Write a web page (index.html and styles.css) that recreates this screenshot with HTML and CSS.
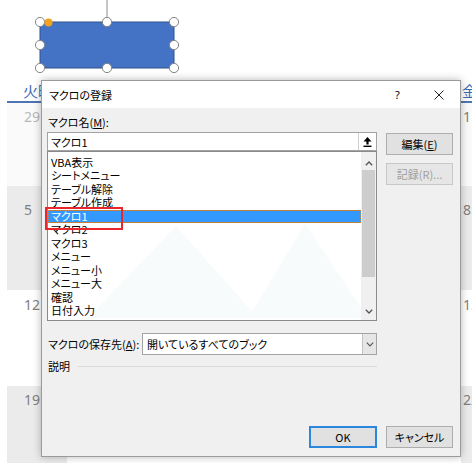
FILE: index.html
```html
<!DOCTYPE html>
<html lang="ja">
<head>
<meta charset="utf-8">
<title>マクロの登録</title>
<link rel="stylesheet" href="styles.css">
</head>
<body>
<div class="page">
  <div class="cal">
    <div class="col col-left">
      <div class="col-head">火曜</div>
      <div class="cell r1 prev">29</div>
      <div class="cell r2 shade">5</div>
      <div class="cell r3">12</div>
      <div class="cell r4 shade">19</div>
    </div>
    <div class="col col-right">
      <div class="col-head">金曜</div>
      <div class="cell r1">1</div>
      <div class="cell r2 shade">8</div>
      <div class="cell r3">15</div>
      <div class="cell r4 shade">22</div>
    </div>
  </div>

  <svg class="shape" width="200" height="80" viewBox="0 0 200 80">
    <line x1="107" y1="0" x2="107" y2="17.5" stroke="#8c8c8c" stroke-width="1"/>
    <rect x="40" y="22" width="134" height="46" fill="#4472c4" stroke="#2f528f" stroke-width="1"/>
    <g fill="#fff" stroke="#858585" stroke-width="1">
      <circle cx="40" cy="22" r="4.6"/>
      <circle cx="107" cy="22" r="4.6"/>
      <circle cx="174" cy="22" r="4.6"/>
      <circle cx="40" cy="45" r="4.6"/>
      <circle cx="174" cy="45" r="4.6"/>
      <circle cx="40" cy="68" r="4.6"/>
      <circle cx="107" cy="68" r="4.6"/>
      <circle cx="174" cy="68" r="4.6"/>
    </g>
    <circle cx="48.5" cy="22.5" r="4" fill="#f2a21c"/>
  </svg>

  <div class="dialog">
    <div class="titlebar">
      <span class="title">マクロの登録</span>
      <span class="help">?</span>
      <svg class="close" width="10" height="10" viewBox="0 0 10 10"><path d="M0.5 0.5 L9.5 9.5 M9.5 0.5 L0.5 9.5" stroke="#222" stroke-width="1" fill="none"/></svg>
    </div>
    <div class="dbody">
      <div class="top">
        <div class="main">
          <div class="label">マクロ名(<u>M</u>):</div>
          <div class="namebox">
            <span class="nametext">マクロ1</span>
            <span class="refbtn"><svg width="9" height="10" viewBox="0 0 9 10"><path d="M4.5 0 L8.5 4.5 L5.6 4.5 L5.6 7.6 L3.4 7.6 L3.4 4.5 L0.5 4.5 Z" fill="#000"/><rect x="0.5" y="8.6" width="8" height="1.4" fill="#000"/></svg></span>
          </div>
          <div class="list">
            <div class="items">
              <svg class="mark" width="313" height="166" viewBox="0 0 313 166"><path d="M40 166 L128 74 L210 166 Z M200 166 L257 72 L320 166 Z" fill="#f8fbfb"/></svg>
              <div class="item">VBA表示</div>
              <div class="item">シートメニュー</div>
              <div class="item">テーブル解除</div>
              <div class="item">テーブル作成</div>
              <div class="item sel">マクロ1</div>
              <div class="item">マクロ2</div>
              <div class="item">マクロ3</div>
              <div class="item">メニュー</div>
              <div class="item">メニュー小</div>
              <div class="item">メニュー大</div>
              <div class="item">確認</div>
              <div class="item">日付入力</div>
            </div>
            <div class="scroll">
              <svg class="chev up" width="8" height="5" viewBox="0 0 8 5"><path d="M0.8 4.3 L4 1 L7.2 4.3" stroke="#555" stroke-width="1.3" fill="none"/></svg>
              <div class="thumb"></div>
              <svg class="chev down" width="8" height="5" viewBox="0 0 8 5"><path d="M0.8 0.7 L4 4 L7.2 0.7" stroke="#555" stroke-width="1.3" fill="none"/></svg>
            </div>
          </div>
        </div>
        <div class="side">
          <button class="btn">編集(<u>E</u>)</button>
          <button class="btn disabled">記録(R)...</button>
        </div>
      </div>
      <div class="saverow">
        <span class="savelabel">マクロの保存先(<u>A</u>):</span>
        <div class="select">
          <span class="seltext">開いているすべてのブック</span>
          <span class="selbtn"><svg width="8" height="5" viewBox="0 0 8 5"><path d="M0.8 0.7 L4 4 L7.2 0.7" stroke="#555" stroke-width="1.1" fill="none"/></svg></span>
        </div>
      </div>
      <div class="desc"><span>説明</span><span class="rule"></span></div>
      <div class="footer">
        <button class="btn ok">OK</button>
        <button class="btn">キャンセル</button>
      </div>
    </div>
  </div>

  <div class="redbox"></div>
</div>
</body>
</html>
```

FILE: styles.css
```css
body {
  margin: 0;
  font-family: "Noto Sans CJK JP", "Noto Sans", sans-serif;
}

.page {
  position: relative;
  width: 472px;
  height: 463px;
  overflow: hidden;
  background: #fff;
}

/* calendar behind */
.cal {
  display: flex;
  height: 100%;
}

.col {
  padding-top: 80px;
  display: flex;
  flex-direction: column;
  box-sizing: border-box;
  height: 100%;
}

.col-left {
  margin-left: 7px;
  width: 60px;
}

.col-right {
  margin-left: auto;
  width: 11px;
}

.col-head {
  height: 23px;
  box-sizing: border-box;
  border-bottom: 2px solid #4f74b4;
  color: #3b68b2;
  font-size: 15px;
  line-height: 21px;
  padding-left: 16px;
  white-space: nowrap;
  overflow: hidden;
}

.col-right .col-head {
  padding-left: 1px;
}

.cell {
  font-family: "Noto Sans", sans-serif;
  font-size: 14px;
  line-height: 16px;
  color: #7f7f7f;
  padding-left: 17px;
  box-sizing: border-box;
  white-space: nowrap;
  overflow: hidden;
}

.col-right .cell {
  padding-left: 2px;
}

.cell.prev {
  color: #b8b8b8;
}

.shade {
  background: #ebebeb;
}

.r1 {
  height: 83px;
  padding-top: 6px;
  background: #fafafa;
}

.r2 {
  height: 104px;
  padding-top: 16px;
}

.r3 {
  height: 96px;
  padding-top: 7px;
}

.r4 {
  flex: 1;
  padding-top: 6px;
}

.shape {
  position: absolute;
  left: 0;
  top: 0;
}

/* dialog */
.dialog {
  position: absolute;
  left: 41px;
  top: 80px;
  width: 420px;
  height: 377px;
  box-sizing: border-box;
  border: 1px solid #9b9b9b;
  background: #f0f0f0;
  box-shadow: 0 0 8px rgba(0, 0, 0, 0.28);
  display: flex;
  flex-direction: column;
  font-size: 11px;
  font-feature-settings: "palt";
  color: #000;
}

.titlebar {
  height: 27px;
  flex: none;
  background: #fff;
  display: flex;
  align-items: center;
  padding-left: 7px;
  padding-right: 16px;
}

.title {
  font-size: 11px;
}

.help {
  margin-left: auto;
  font-family: "Noto Sans", sans-serif;
  font-size: 11px;
  width: 6px;
}

.close {
  margin-left: 33px;
}

.dbody {
  flex: 1;
  display: flex;
  flex-direction: column;
  padding: 0 7px 8px 5px;
}

.top {
  display: flex;
  gap: 9px;
}

.main {
  width: 330px;
}

.label {
  margin-top: 6px;
  line-height: 16px;
  padding-left: 1px;
}

.namebox {
  margin-top: 2px;
  height: 19px;
  box-sizing: border-box;
  border: 1px solid #a3a3a3;
  background: #fff;
  display: flex;
  align-items: center;
  padding-left: 3px;
}

.refbtn {
  margin-left: auto;
  width: 18px;
  height: 100%;
  box-sizing: border-box;
  border-left: 1px solid #cfcfcf;
  display: flex;
  align-items: center;
  justify-content: center;
}

.list {
  height: 170px;
  box-sizing: border-box;
  border: 1px solid #8a8a8a;
  background: #fff;
  display: flex;
}

.items {
  position: relative;
  width: 313px;
  padding-top: 3.5px;
}

.mark {
  position: absolute;
  left: 0;
  top: 0;
}

.item {
  position: relative;
  height: 13.5px;
  line-height: 13.5px;
  padding-left: 3px;
  white-space: nowrap;
}

.item.sel {
  background: #3399ff;
  color: #fff;
  outline: 1px dotted #c88640;
  outline-offset: -1px;
}

.scroll {
  width: 15px;
  background: #f0f0f0;
  display: flex;
  flex-direction: column;
  align-items: center;
}

.chev.up {
  margin-top: 9px;
}

.thumb {
  margin-top: 4px;
  width: 13px;
  height: 107px;
  background: #cdcdcd;
}

.chev.down {
  margin-top: 32px;
}

.side {
  padding-top: 25px;
  display: flex;
  flex-direction: column;
  gap: 8px;
}

.btn {
  width: 67px;
  height: 22px;
  box-sizing: border-box;
  border: 1px solid #adadad;
  background: #e1e1e1;
  font-family: inherit;
  font-size: 11px;
  font-feature-settings: "palt";
  color: #000;
  padding: 0;
  line-height: 18px;
}

.btn.disabled {
  color: #a0a0a0;
  border-color: #c8c8c8;
  background: #e6e6e6;
}

.saverow {
  width: 330px;
  margin-top: 12px;
  display: flex;
  align-items: center;
}

.savelabel {
  width: 95px;
  flex: none;
  padding-left: 1px;
  box-sizing: border-box;
  white-space: nowrap;
}

.select {
  flex: 1;
  height: 22px;
  box-sizing: border-box;
  border: 1px solid #a3a3a3;
  background: #fff;
  display: flex;
  align-items: center;
  padding-left: 4px;
}

.selbtn {
  margin-left: auto;
  width: 14px;
  height: 100%;
  box-sizing: border-box;
  border-left: 1px solid #c4c4c4;
  background: #e6e6e6;
  display: flex;
  align-items: center;
  justify-content: center;
}

.desc {
  width: 330px;
  margin-top: 3px;
  line-height: 16px;
  display: flex;
  align-items: center;
  padding-left: 1px;
  box-sizing: border-box;
}

.rule {
  flex: 1;
  height: 1px;
  margin-left: 8px;
  background: #d9d9d9;
}

.footer {
  margin-top: auto;
  display: flex;
  justify-content: flex-end;
  gap: 9px;
}

.btn.ok {
  width: 68px;
  border: 2px solid #2b87dc;
  line-height: 17px;
}

.redbox {
  position: absolute;
  left: 45px;
  top: 207px;
  width: 78px;
  height: 23px;
  box-sizing: border-box;
  border: 2px solid #e8262b;
}
```
